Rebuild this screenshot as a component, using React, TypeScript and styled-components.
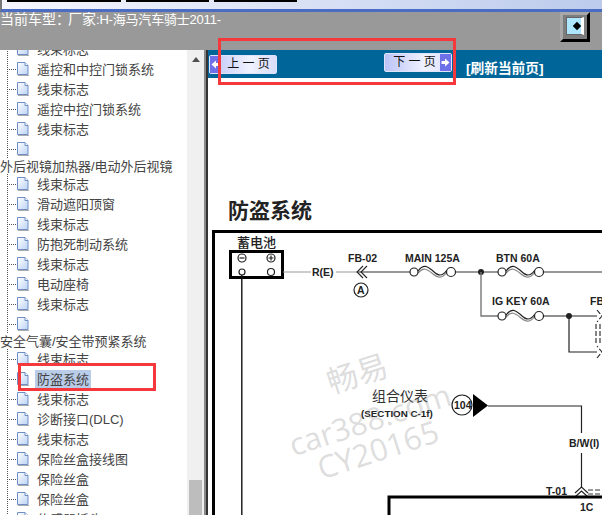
import { createGlobalStyle, styled } from "styled-components";

const GlobalStyle = createGlobalStyle`
    html, body {
        margin: 0;
        padding: 0;
        background: #fff;
    }
`;

const CJK = `"Liberation Sans", "Noto Sans CJK SC", sans-serif`;

const Page = styled.div`
    position: relative;
    width: 602px;
    height: 515px;
    overflow: hidden;
    background: #fff;
    font-family: ${CJK};
`;

const WindowChrome = styled.div`
    box-sizing: border-box;
    height: 12px;
    padding-left: 5px;
    display: flex;
    gap: 5px;
    border-left: 2px solid #777;
    border-bottom: 3px solid #4a6cc2;
    background: linear-gradient(to right, #f6f7fe, #bccbec);
`;

const ChromeTab = styled.div<{ $w: number }>`
    width: ${(p) => p.$w}px;
    height: 2px;
    background: #000;
`;

const CarBar = styled.header`
    box-sizing: border-box;
    height: 38px;
    padding-right: 12px;
    display: flex;
    justify-content: space-between;
    background: #999;
`;

const CarLabel = styled.div`
    color: #fff;
    font-size: 14px;
    line-height: 15px;
    white-space: pre;
`;

const CarPrefix = styled.span`
    margin-right: -2px;
`;

const CarName = styled.span`
    font-size: 13px;
    letter-spacing: -0.2px;
`;

const ToggleButton = styled.button`
    box-sizing: border-box;
    width: 30px;
    height: 30px;
    padding: 0 0 3px;
    display: flex;
    align-items: center;
    justify-content: center;
    background: #7d7d7d;
    border: 3px solid;
    border-color: #a8a8a8 #000 #000 #a8a8a8;
`;

const ToggleFace = styled.span`
    box-sizing: border-box;
    width: 18px;
    height: 18px;
    display: flex;
    align-items: center;
    justify-content: flex-end;
    padding-right: 1px;
    background: #aee6ff;
    border: 1px solid #666;
    border-right: 3px solid #fff;
`;

const Diamond = styled.span`
    width: 6px;
    height: 6px;
    background: #000;
    transform: rotate(45deg);
`;

const Main = styled.div`
    display: flex;
    height: 465px;
`;

const Tree = styled.nav`
    width: 187px;
    height: 100%;
    overflow: hidden;
    color: #444;
    font-size: 13px;
`;

const TreeList = styled.ul`
    list-style: none;
    margin: -11px 0 0;
    padding: 0;
`;

const GroupTitle = styled.li`
    height: 15px;
    line-height: 15px;
    white-space: nowrap;
`;

const Row = styled.li`
    height: 20px;
    display: flex;
    align-items: center;
    white-space: nowrap;
`;

const Connector = styled.span`
    align-self: stretch;
    flex: none;
    width: 10px;
    margin-left: 7px;
    background:
        repeating-linear-gradient(to bottom, #555 0 1px, transparent 1px 2px) left top / 1px 100% no-repeat,
        repeating-linear-gradient(to right, #555 0 1px, transparent 1px 2px) left center / 100% 1px no-repeat;
`;

const DocIcon = styled.svg`
    flex: none;
    width: 12px;
    height: 14px;
    margin-right: 8px;
`;

const RowLabel = styled.span<{ $selected?: boolean }>`
    margin-left: ${(p) => (p.$selected ? -2 : 0)}px;
    padding: 0 ${(p) => (p.$selected ? 2 : 0)}px;
    line-height: 19px;
    background: ${(p) => (p.$selected ? "#b9cce8" : "transparent")};
`;

const ScrollTrack = styled.div`
    box-sizing: border-box;
    width: 17px;
    height: 100%;
    padding: 7px 2px 0;
    display: flex;
    flex-direction: column;
    justify-content: space-between;
    background: #f0f0f0;
`;

const ScrollArrow = styled.div`
    flex: none;
    align-self: center;
    width: 0;
    height: 0;
    border-left: 4px solid transparent;
    border-right: 4px solid transparent;
    border-bottom: 5px solid #505050;
`;

const ScrollThumb = styled.div`
    height: 35px;
    background: #bdbdbd;
`;

const Splitter = styled.div`
    box-sizing: border-box;
    width: 4px;
    background: #8a8a8a;
    border-right: 2px solid #333;
`;

const Content = styled.main`
    flex: 1;
    min-width: 0;
`;

const NavBand = styled.div`
    box-sizing: border-box;
    height: 28px;
    padding-left: 1px;
    display: flex;
    background: #006699;
`;

const PageButton = styled.button<{ $top: number; $next?: boolean }>`
    box-sizing: border-box;
    width: 68px;
    height: 19px;
    margin: ${(p) => p.$top}px 0 0 ${(p) => (p.$next ? 107 : 0)}px;
    padding: 0 0 0 ${(p) => (p.$next ? 4 : 0)}px;
    display: flex;
    flex-direction: ${(p) => (p.$next ? "row-reverse" : "row")};
    align-items: stretch;
    border: 1px solid #dfe4fb;
    border-radius: 2px;
    background: linear-gradient(to right, #bcc4f6, #f0f2ff 60%, #d9ddfa);
    font-family: ${CJK};
    font-size: 12px;
    color: #111;
`;

const ArrowCap = styled.span`
    width: 11px;
    display: flex;
    align-items: center;
    justify-content: center;
    background: #6d70e6;
`;

const ButtonLabel = styled.span`
    flex: 1;
    line-height: 16px;
    white-space: pre;
    text-align: center;
`;

const RefreshLink = styled.a`
    margin: 11px 0 0 14px;
    color: #fff;
    font-size: 13.7px;
    font-weight: 700;
    line-height: 15px;
    white-space: nowrap;
`;

const SheetTitle = styled.h1`
    margin: 0;
    padding: 122px 0 0 20px;
    color: #222;
    font-size: 21px;
    font-weight: 700;
    line-height: 21px;
`;

const Diagram = styled.svg`
    display: block;
    width: 394px;
    height: 285px;
    margin-top: 9px;
`;

const Callout = styled.div<{ $x: number; $y: number; $w: number; $h: number }>`
    box-sizing: border-box;
    position: absolute;
    left: ${(p) => p.$x}px;
    top: ${(p) => p.$y}px;
    width: ${(p) => p.$w}px;
    height: ${(p) => p.$h}px;
    border: 3px solid #f5383b;
`;

type TreeEntry = { kind: "group" | "item"; label: string; selected?: boolean };

const tree: TreeEntry[] = [
    { kind: "item", label: "线束标志" },
    { kind: "item", label: "遥控和中控门锁系统" },
    { kind: "item", label: "线束标志" },
    { kind: "item", label: "遥控中控门锁系统" },
    { kind: "item", label: "线束标志" },
    { kind: "item", label: "" },
    { kind: "group", label: "外后视镜加热器/电动外后视镜" },
    { kind: "item", label: "线束标志" },
    { kind: "item", label: "滑动遮阳顶窗" },
    { kind: "item", label: "线束标志" },
    { kind: "item", label: "防抱死制动系统" },
    { kind: "item", label: "线束标志" },
    { kind: "item", label: "电动座椅" },
    { kind: "item", label: "线束标志" },
    { kind: "item", label: "" },
    { kind: "group", label: "安全气囊/安全带预紧系统" },
    { kind: "item", label: "线束标志" },
    { kind: "item", label: "防盗系统", selected: true },
    { kind: "item", label: "线束标志" },
    { kind: "item", label: "诊断接口(DLC)" },
    { kind: "item", label: "线束标志" },
    { kind: "item", label: "保险丝盒接线图" },
    { kind: "item", label: "保险丝盒" },
    { kind: "item", label: "保险丝盒" },
    { kind: "item", label: "传感器插头(T)" },
];

function PageDoc() {
    return (
        <DocIcon viewBox="0 0 12 14">
            <defs>
                <linearGradient id="docFill" x1="0" y1="0" x2="1" y2="1">
                    <stop offset="0" stopColor="#ffffff" />
                    <stop offset="1" stopColor="#bcd3f4" />
                </linearGradient>
            </defs>
            <path d="M0.5 0.5H8L11 3.5V12.5H0.5Z" fill="url(#docFill)" stroke="#6f8ec8" />
            <path d="M8 0.5V3.5H11" fill="#fff" stroke="#6f8ec8" />
            <path d="M1 13.5H12" stroke="#aaa" />
        </DocIcon>
    );
}

function WhiteArrow({ flip }: { flip?: boolean }) {
    return (
        <svg width="9" height="9" viewBox="0 0 9 9">
            <path
                d={flip ? "M8.5 4.5L4 0.5V3H0.5V6H4V8.5Z" : "M0.5 4.5L5 0.5V3H8.5V6H5V8.5Z"}
                fill="#fff"
            />
        </svg>
    );
}

function Fuse({ x, y }: { x: number; y: number }) {
    return (
        <g fill="#fff" stroke="#222" strokeWidth="1.2">
            <path
                d={`M${x + 4} ${y - 1}C${x + 10} ${y - 9} ${x + 14} ${y - 5} ${x + 19} ${y - 1}C${x + 24} ${y + 4} ${x + 28} ${y + 5} ${x + 33} ${y - 2}`}
                fill="none"
            />
            <path
                d={`M${x + 4} ${y + 1}C${x + 10} ${y - 6} ${x + 14} ${y - 2} ${x + 19} ${y + 2}C${x + 24} ${y + 6} ${x + 28} ${y + 7} ${x + 33} ${y}`}
                fill="none"
                stroke="#888"
            />
            <circle cx={x} cy={y} r="4" />
            <circle cx={x + 37} cy={y} r="4.5" />
        </g>
    );
}

function Label({ x, y, size = 10.5, children }: { x: number; y: number; size?: number; children: string }) {
    return (
        <text x={x} y={y} fontFamily='"Liberation Sans", sans-serif' fontWeight="700" fontSize={size} fill="#222">
            {children}
        </text>
    );
}

function WiringDiagram() {
    return (
        <Diagram viewBox="208 230 394 285">
            {/* sheet frame */}
            <path d="M213.5 515V231.5H602" fill="none" stroke="#000" strokeWidth="3" />

            {/* battery */}
            <text x="237" y="247" fontFamily={CJK} fontSize="13" fontWeight="500" fill="#222">
                蓄电池
            </text>
            <rect x="230.5" y="251.5" width="52" height="26" fill="#fff" stroke="#000" strokeWidth="3" />
            <g fill="none" stroke="#222" strokeWidth="1.2">
                <circle cx="242" cy="258" r="4" />
                <path d="M239.5 258H244.5" />
                <circle cx="271" cy="258" r="4" />
                <path d="M268.5 258H273.5M271 255.5V260.5" />
                <circle cx="242" cy="272" r="3" />
                <circle cx="271" cy="272" r="3.5" />
            </g>
            <path d="M241.8 275V515" stroke="#111" strokeWidth="1.4" />

            {/* battery feed */}
            <path d="M283 272H311M336 272H358" stroke="#999" strokeWidth="1.2" />
            <path d="M358 272H410" stroke="#333" strokeWidth="1.2" />
            <Label x={312} y={276}>R(E)</Label>
            <path d="M363 266L357 272L363 278M367 266L361 272L367 278" fill="none" stroke="#222" strokeWidth="1.1" />
            <Label x={348} y={262}>FB-02</Label>
            <circle cx="361" cy="290" r="7" fill="#fff" stroke="#222" strokeWidth="1.2" />
            <Label x={357} y={294}>A</Label>

            <Label x={405} y={262}>MAIN 125A</Label>
            <Fuse x={414} y={272} />
            <path d="M455.5 272H498M543 272H602" stroke="#333" strokeWidth="1.2" />
            <circle cx="481" cy="272" r="3" fill="#222" />
            <Label x={496} y={262}>BTN 60A</Label>
            <Fuse x={502} y={272} />

            <path d="M481 272V316H498" fill="none" stroke="#777" strokeWidth="1.4" />
            <Label x={492} y={305}>IG KEY 60A</Label>
            <Fuse x={502} y={316} />
            <path d="M543 316H597M569 316V352H597" fill="none" stroke="#222" strokeWidth="1.2" />
            <circle cx="569" cy="316" r="3" fill="#222" />
            <Label x={590} y={305}>FB</Label>
            <path
                d="M597 310L602 316L597 322M597 358L602 352L597 346M596 324V344M600 324V344"
                fill="none"
                stroke="#222"
                strokeWidth="1.1"
                strokeDasharray="5 2"
            />

            {/* instrument cluster branch */}
            <text x="372" y="401" fontFamily={CJK} fontSize="14" fill="#333">
                组合仪表
            </text>
            <Label x={361} y={417} size={9.8}>(SECTION C-1f)</Label>
            <circle cx="462" cy="405" r="10" fill="#fff" stroke="#222" strokeWidth="1.2" />
            <Label x={454} y={409} size={10.5}>104</Label>
            <path d="M473 394L488 405.5L473 417Z" fill="#000" />
            <path d="M488 406H581.5V433M581.5 453V488" fill="none" stroke="#222" strokeWidth="1.2" />
            <Label x={569} y={447}>B/W(I)</Label>
            <Label x={546} y={495}>T-01</Label>
            <path d="M575 493L581.5 487L588 493M575 497L581.5 491L588 497" fill="none" stroke="#222" strokeWidth="1.1" />
            <path d="M588 490H602M588 494H602" stroke="#333" strokeDasharray="5 2" />
            <path d="M389 515V497H602" fill="none" stroke="#000" strokeWidth="3" />
            <Label x={580} y={511}>1C</Label>

            {/* watermark */}
            <g
                fill="#8c8c8c"
                fillOpacity="0.3"
                textAnchor="middle"
                fontFamily='"Open Sans", "Noto Sans CJK SC", sans-serif'
            >
                <text x="357" y="385" fontSize="31" fontFamily={CJK} transform="rotate(-18 357 373)">
                    畅易
                </text>
                <text x="370" y="431" fontSize="31" transform="rotate(-18 370 420)">
                    car388.com
                </text>
                <text x="378" y="461" fontSize="31" transform="rotate(-18 378 450)">
                    CY20165
                </text>
            </g>
        </Diagram>
    );
}

export default function App() {
    return (
        <Page>
            <GlobalStyle />
            <WindowChrome>
                <ChromeTab $w={114} />
                <ChromeTab $w={83} />
                <ChromeTab $w={83} />
            </WindowChrome>
            <CarBar>
                <CarLabel>
                    <CarPrefix>当前车型：</CarPrefix>厂家<CarName>:H-海马汽车骑士2011-</CarName>
                </CarLabel>
                <ToggleButton aria-label="toggle">
                    <ToggleFace>
                        <Diamond />
                    </ToggleFace>
                </ToggleButton>
            </CarBar>
            <Main>
                <Tree>
                    <TreeList>
                        {tree.map((entry, i) =>
                            entry.kind === "group" ? (
                                <GroupTitle key={i}>{entry.label}</GroupTitle>
                            ) : (
                                <Row key={i}>
                                    <Connector />
                                    <PageDoc />
                                    <RowLabel $selected={entry.selected}>{entry.label}</RowLabel>
                                </Row>
                            )
                        )}
                    </TreeList>
                </Tree>
                <ScrollTrack>
                    <ScrollArrow />
                    <ScrollThumb />
                </ScrollTrack>
                <Splitter />
                <Content>
                    <NavBand>
                        <PageButton $top={5}>
                            <ArrowCap>
                                <WhiteArrow />
                            </ArrowCap>
                            <ButtonLabel>上 一 页</ButtonLabel>
                        </PageButton>
                        <PageButton $top={3} $next>
                            <ArrowCap>
                                <WhiteArrow flip />
                            </ArrowCap>
                            <ButtonLabel>下 一 页</ButtonLabel>
                        </PageButton>
                        <RefreshLink>[刷新当前页]</RefreshLink>
                    </NavBand>
                    <SheetTitle>防盗系统</SheetTitle>
                    <WiringDiagram />
                </Content>
            </Main>
            <Callout $x={218} $y={38} $w={238} $h={47} />
            <Callout $x={18} $y={363} $w={138} $h={28} />
        </Page>
    );
}
